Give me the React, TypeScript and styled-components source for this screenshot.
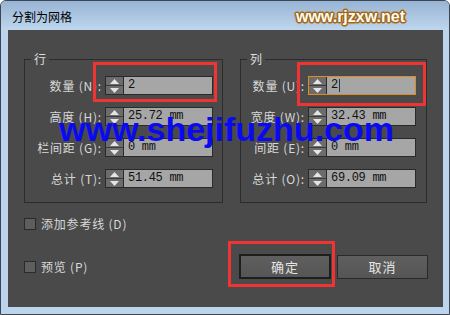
import React from "react";
import styled, { createGlobalStyle } from "styled-components";

const Global = createGlobalStyle`
  html, body { margin: 0; padding: 0; background: #ffffff; }
  body { width: 450px; height: 315px; overflow: hidden; }
`;

const Window = styled.div`
  position: relative;
  width: 450px;
  height: 315px;
  box-sizing: border-box;
  border: 1px solid #3b4652;
  border-radius: 6px 6px 0 0;
  background: #bcd4ec;
  display: flex;
  flex-direction: column;
  overflow: hidden;
`;

const TitleBar = styled.div`
  height: 29px;
  flex: none;
  display: flex;
  align-items: center;
  justify-content: space-between;
  padding: 0 44px 0 11px;
  background: linear-gradient(#98b4d4, #bed6ee);
`;

const Title = styled.div`
  font-family: "Noto Sans CJK SC", sans-serif;
  font-size: 12px;
  color: #000;
  line-height: 14px;
  margin-top: 2px;
`;

const SiteMark = styled.div`
  font-family: "Liberation Sans", Arial, sans-serif;
  font-weight: bold;
  font-size: 16px;
  color: #fffbea;
  margin-top: 3px;
  text-shadow: 1px 0 0 #9a6526, -1px 0 0 #9a6526, 0 1px 0 #9a6526, 0 -1px 0 #9a6526,
    1px 1px 0 #9a6526, -1px -1px 0 #9a6526, 1px -1px 0 #9a6526, -1px 1px 0 #9a6526,
    2px 0 1px #c08a3c, -2px 0 1px #c08a3c, 0 2px 1px #c08a3c, 0 -2px 1px #c08a3c;
`;

const Panel = styled.div`
  flex: none;
  height: 277px;
  margin: 0 6px 7px 7px;
  background: #4a4a4a;
  display: flex;
  flex-direction: column;
  padding: 29px 15px 0 16px;
  box-sizing: border-box;
  font-family: "Noto Sans CJK SC", sans-serif;
  color: #dcdcdc;
`;

const Groups = styled.div`
  display: flex;
  gap: 17px;
`;

const Group = styled.div<{ $w: number; $label: number }>`
  position: relative;
  width: ${(p) => p.$w}px;
  box-sizing: border-box;
  border: 1px solid #2c2c2c;
  padding: 16px 0 14px 0;
  display: grid;
  grid-template-columns: ${(p) => p.$label}px 108px;
  column-gap: 3px;
  row-gap: 12px;
  align-items: center;
`;

const Legend = styled.span`
  position: absolute;
  top: -9px;
  left: 6px;
  padding: 0 3px;
  background: #4a4a4a;
  font-size: 12px;
  line-height: 16px;
  color: #dedede;
`;

const Label = styled.span`
  text-align: right;
  font-size: 12px;
  line-height: 14px;
  letter-spacing: 0.8px;
  white-space: nowrap;
  color: #d8d8d8;
`;

const NumInput = styled.div<{ $focus?: boolean }>`
  height: 19px;
  box-sizing: border-box;
  border: 1px solid ${(p) => (p.$focus ? "#e08a24" : "#2a2a2a")};
  display: flex;
`;

const Spinner = styled.div`
  width: 17px;
  flex: none;
  display: flex;
  flex-direction: column;
  background: #6c6c6c;
  border-right: 1px solid #2a2a2a;
`;

const SpinHalf = styled.div<{ $top?: boolean }>`
  flex: 1;
  display: flex;
  align-items: center;
  justify-content: center;
  border-bottom: ${(p) => (p.$top ? "1px solid #3c3c3c" : "none")};
`;

const Field = styled.div`
  flex: 1;
  background: #a6a6a6;
  color: #111;
  font-family: "Liberation Mono", monospace;
  font-size: 12px;
  letter-spacing: -0.3px;
  line-height: 17px;
  padding-left: 4px;
  white-space: pre;
  display: flex;
  align-items: center;
`;

const Caret = styled.span`
  display: inline-block;
  width: 1px;
  height: 13px;
  background: #333;
  margin-left: 1px;
`;

const CheckRow = styled.label<{ $mt: number }>`
  display: flex;
  align-items: center;
  gap: 5px;
  margin-top: ${(p) => p.$mt}px;
  font-size: 12px;
  line-height: 14px;
  letter-spacing: 0.8px;
  color: #d8d8d8;
`;

const Box = styled.span`
  width: 12px;
  height: 12px;
  box-sizing: border-box;
  border: 1px solid #2a2a2a;
  background: #5e5e5e;
  flex: none;
`;

const BottomRow = styled.div`
  display: flex;
  align-items: center;
  justify-content: space-between;
  margin-top: 23px;
`;

const Buttons = styled.div`
  display: flex;
  gap: 6px;
  align-items: center;
`;

const Button = styled.button<{ $primary?: boolean }>`
  width: ${(p) => (p.$primary ? 92 : 91)}px;
  height: ${(p) => (p.$primary ? 25 : 24)}px;
  box-sizing: border-box;
  border: ${(p) => (p.$primary ? "2px solid #1e1e1e" : "1px solid #2a2a2a")};
  background: linear-gradient(#5f5f5f, #555555);
  color: #e6e6e6;
  font-family: "Noto Sans CJK SC", sans-serif;
  font-size: 13px;
  letter-spacing: 1px;
  padding: 0;
  display: flex;
  align-items: center;
  justify-content: center;
`;

const Annot = styled.div`
  position: absolute;
  border: 3px solid #f03434;
  box-sizing: border-box;
  pointer-events: none;
`;

const Watermark = styled.div`
  position: absolute;
  left: 58px;
  top: 111px;
  font-family: "Liberation Sans", Arial, sans-serif;
  font-weight: bold;
  font-size: 34px;
  line-height: 34px;
  color: #0a0af2;
  white-space: nowrap;
  pointer-events: none;
`;

const Tri = ({ up }: { up?: boolean }) => (
  <svg width="9" height="5" viewBox="0 0 9 5">
    <polygon points={up ? "4.5,0 9,5 0,5" : "0,0 9,0 4.5,5"} fill="#e4e4e4" />
  </svg>
);

type Row = { label: string; value: string; focus?: boolean };

const Input = ({ value, focus }: { value: string; focus?: boolean }) => (
  <NumInput $focus={focus}>
    <Spinner>
      <SpinHalf $top>
        <Tri up />
      </SpinHalf>
      <SpinHalf>
        <Tri />
      </SpinHalf>
    </Spinner>
    <Field>
      {value}
      {focus && <Caret />}
    </Field>
  </NumInput>
);

const rows: Row[] = [
  { label: "数量 (N):", value: "2" },
  { label: "高度 (H):", value: "25.72 mm" },
  { label: "栏间距 (G):", value: "0 mm" },
  { label: "总计 (T):", value: "51.45 mm" },
];

const cols: Row[] = [
  { label: "数量 (U):", value: "2", focus: true },
  { label: "宽度 (W):", value: "32.43 mm" },
  { label: "间距 (E):", value: "0 mm" },
  { label: "总计 (O):", value: "69.09 mm" },
];

export default function App() {
  return (
    <>
      <Global />
      <Window>
        <TitleBar>
          <Title>分割为网格</Title>
          <SiteMark>www.rjzxw.net</SiteMark>
        </TitleBar>
        <Panel>
          <Groups>
            <Group $w={199} $label={77}>
              <Legend>行</Legend>
              {rows.map((r) => (
                <React.Fragment key={r.label}>
                  <Label>{r.label}</Label>
                  <Input value={r.value} focus={r.focus} />
                </React.Fragment>
              ))}
            </Group>
            <Group $w={187} $label={64}>
              <Legend>列</Legend>
              {cols.map((r) => (
                <React.Fragment key={r.label}>
                  <Label>{r.label}</Label>
                  <Input value={r.value} focus={r.focus} />
                </React.Fragment>
              ))}
            </Group>
          </Groups>
          <CheckRow $mt={14}>
            <Box />
            添加参考线 (D)
          </CheckRow>
          <BottomRow>
            <CheckRow $mt={0}>
              <Box />
              预览 (P)
            </CheckRow>
            <Buttons>
              <Button $primary>确定</Button>
              <Button>取消</Button>
            </Buttons>
          </BottomRow>
        </Panel>
        <Annot style={{ left: 92, top: 61, width: 124, height: 40 }} />
        <Annot style={{ left: 296, top: 61, width: 129, height: 44 }} />
        <Annot style={{ left: 227, top: 240, width: 107, height: 46 }} />
        <Watermark>www.shejifuzhu.com</Watermark>
      </Window>
    </>
  );
}
